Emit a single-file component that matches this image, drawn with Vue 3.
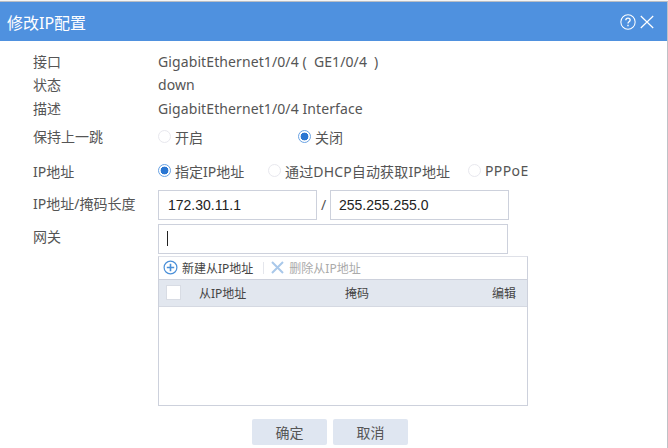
<script setup>
const infoRows = [
  { label: "接口", value: "GigabitEthernet1/0/4 (\u2002GE1/0/4\u2002)" },
  { label: "状态", value: "down" },
  { label: "描述", value: "GigabitEthernet1/0/4 Interface" },
];
</script>

<template>
  <div class="page">
    <div class="dialog">
      <header class="head">
        <span class="title">修改IP配置</span>
        <span class="tools">
          <svg width="16" height="16" viewBox="0 0 17 17" fill="none" stroke="#fff">
            <circle cx="8.5" cy="8.5" r="7.6" stroke-width="1.1" />
            <path d="M6.2 6.6c0-1.4 1-2.2 2.3-2.2s2.3.8 2.3 2c0 1.8-2.3 1.8-2.3 3.6" stroke-width="1.4" />
            <path d="M8.5 11.3v1.6" stroke-width="1.5" />
          </svg>
          <svg width="14" height="14" viewBox="0 0 14 14" fill="none" stroke="#fff" stroke-width="1.2">
            <path d="M.8 1l12.4 12M13.2 1L.8 13" />
          </svg>
        </span>
      </header>

      <div class="body">
        <div class="info">
          <div v-for="row in infoRows" :key="row.label" class="info-row">
            <span class="label">{{ row.label }}</span>
            <span class="value">{{ row.value }}</span>
          </div>
        </div>

        <div class="row hop">
          <span class="label">保持上一跳</span>
          <span class="radios">
            <span class="radio w-on"><i class="dot"></i>开启</span>
            <span class="radio"><i class="dot on"></i>关闭</span>
          </span>
        </div>

        <div class="row ip">
          <span class="label">IP地址</span>
          <span class="radios">
            <span class="radio a"><i class="dot on"></i>指定IP地址</span>
            <span class="radio b"><i class="dot"></i>通过DHCP自动获取IP地址</span>
            <span class="radio c"><i class="dot"></i>PPPoE</span>
          </span>
        </div>

        <div class="row addr">
          <span class="label">IP地址/掩码长度</span>
          <span class="inputs">
            <span class="input short">172.30.11.1</span>
            <span class="slash">/</span>
            <span class="input mask">255.255.255.0</span>
          </span>
        </div>

        <div class="row gate">
          <span class="label">网关</span>
          <span class="input wide"><i class="caret"></i></span>
        </div>

        <div class="table">
          <div class="toolbar">
            <span class="tool">
              <svg width="15" height="15" viewBox="0 0 15 15" fill="none" stroke="#4a8fd8">
                <circle cx="7.5" cy="7.5" r="6.4" stroke-width="1.2" />
                <path d="M3.8 7.5h7.4M7.5 3.8v7.4" stroke-width="1.6" />
              </svg>
              新建从IP地址
            </span>
            <i class="sep"></i>
            <span class="tool off">
              <svg width="13" height="13" viewBox="0 0 13 13" fill="none" stroke="#a9c8ea" stroke-width="2">
                <path d="M1 1l11 11M12 1L1 12" />
              </svg>
              删除从IP地址
            </span>
          </div>
          <div class="thead">
            <i class="check"></i>
            <span class="c-ip">从IP地址</span>
            <span class="c-mask">掩码</span>
            <span class="c-edit">编辑</span>
          </div>
        </div>

        <div class="actions">
          <button class="btn">确定</button>
          <button class="btn">取消</button>
        </div>
      </div>
    </div>
  </div>
</template>

<style>
html, body {
  margin: 0;
  background: #fff;
}
</style>

<style scoped>
.page {
  width: 668px;
  height: 448px;
  overflow: hidden;
  box-sizing: border-box;
  padding-top: 1px;
  background: #f4f4f4;
  font-family: "Noto Sans", "Noto Sans CJK SC", sans-serif;
  font-size: 14px;
  color: #555;
}
.dialog {
  box-sizing: border-box;
  width: 668px;
  height: 447px;
  border-top: 1px solid #b9bdc4;
  border-right: 1px solid #bfc1c6;
  background: #fff;
}
.head {
  height: 39px;
  display: flex;
  align-items: center;
  justify-content: space-between;
  padding: 0 13px 0 7px;
  background: #4f91df;
  color: #fff;
}
.title {
  font-size: 16px;
}
.tools {
  display: flex;
  align-items: center;
  gap: 4px;
}
.body {
  padding: 9px 0 0 33px;
}
.info-row {
  display: grid;
  grid-template-columns: 125px 1fr;
  height: 23.4px;
  line-height: 23px;
}
.value {
  letter-spacing: 0.1px;
}
.row {
  display: grid;
  grid-template-columns: 125px 1fr;
  align-items: center;
}
.hop {
  margin-top: 3.8px;
  height: 26px;
}
.hop .label {
  margin-bottom: 2px;
}
.ip {
  margin-top: 7px;
  height: 28px;
}
.addr {
  margin-top: 5px;
  height: 30px;
}
.addr .label {
  margin-bottom: 3px;
}
.gate {
  margin-top: 4px;
  height: 30px;
}
.gate .label {
  align-self: start;
  line-height: 26px;
}
.radios {
  display: flex;
}
.radio {
  display: inline-flex;
  align-items: center;
  gap: 4px;
}
.w-on {
  width: 140px;
}
.a {
  width: 110px;
}
.b {
  width: 200px;
  letter-spacing: 0.15px;
}
.c {
  letter-spacing: 0.4px;
}
.dot {
  box-sizing: border-box;
  width: 13px;
  height: 13px;
  border: 1px solid #e8e8ee;
  border-radius: 50%;
  background: #fff;
}
.dot.on {
  border-color: #6aa3e4;
  background: radial-gradient(circle, #2a76d2 0 3.6px, #fff 4.2px);
}
.inputs {
  display: flex;
  align-items: center;
}
.input {
  box-sizing: border-box;
  height: 30px;
  display: flex;
  align-items: center;
  border: 1px solid #cdd1dc;
  background: #fff;
  color: #222;
  font-family: "Liberation Sans", sans-serif;
  font-size: 14px;
}
.short {
  width: 159px;
  padding-left: 9px;
}
.slash {
  width: 13px;
  text-align: center;
}
.mask {
  width: 179px;
  padding-left: 8px;
}
.wide {
  width: 350px;
  padding-left: 8px;
}
.caret {
  width: 1px;
  height: 15px;
  background: #222;
}
.table {
  box-sizing: border-box;
  width: 370px;
  height: 150px;
  margin: 2px 0 0 125px;
  border: 1px solid #cdd1dc;
  border-top-color: #dfe1e8;
}
.toolbar {
  height: 22px;
  display: flex;
  align-items: center;
  padding-left: 4px;
  font-size: 12px;
}
.tool {
  display: inline-flex;
  align-items: center;
  gap: 4px;
  color: #444;
}
.tool.off {
  gap: 5px;
  color: #aaa;
}
.sep {
  width: 1px;
  height: 12px;
  margin: 0 7px 0 10px;
  background: #e4e6ec;
}
.thead {
  box-sizing: border-box;
  height: 28px;
  display: flex;
  align-items: center;
  background: #e2e7ef;
  border-top: 1px solid #cdd1dc;
  border-bottom: 1px solid #d5d9e2;
  font-size: 12px;
  color: #444;
}
.check {
  width: 13px;
  height: 13px;
  margin-left: 7px;
  border: 1px solid #d8dce4;
  background: #fff;
}
.c-ip {
  margin-left: 18px;
  width: 146px;
}
.c-mask {
  width: 147px;
}
.c-edit {
  width: 24px;
}
.actions {
  display: flex;
  gap: 6px;
  margin: 13px 0 0 219px;
}
.btn {
  width: 75px;
  height: 26px;
  padding: 0;
  border: 0;
  border-radius: 2px;
  background: #dfe6f1;
  color: #555;
  font: inherit;
}
</style>
